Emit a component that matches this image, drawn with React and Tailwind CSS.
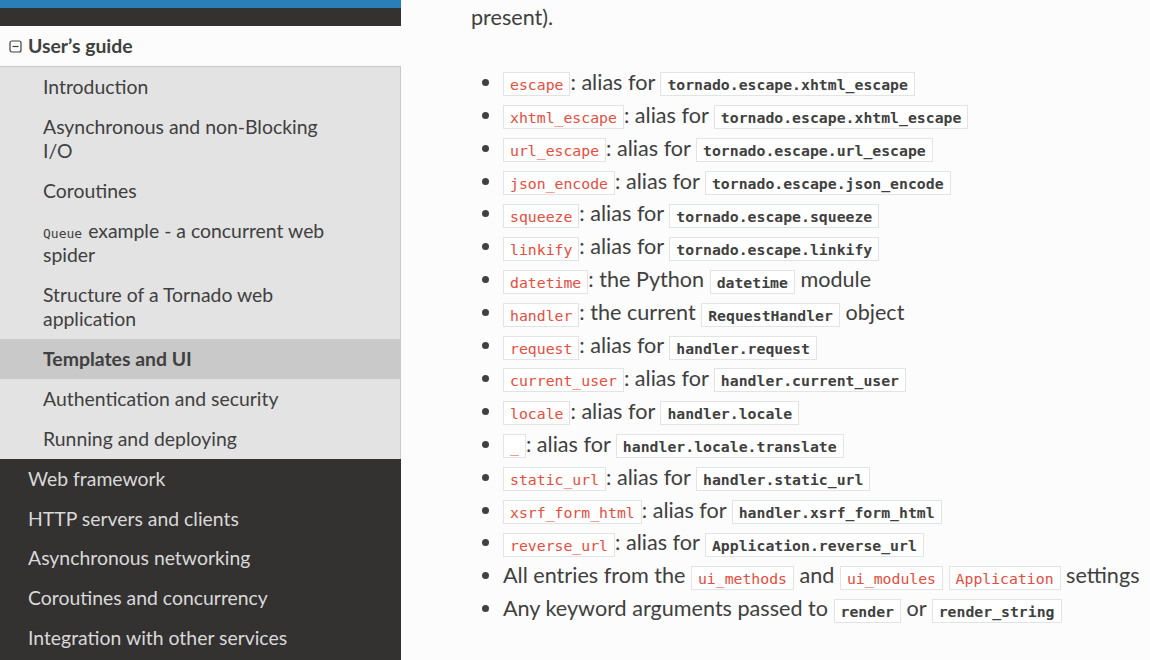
import React from "react";

// inline literal, red like the RTD theme
const Lit = ({ children }) => (
  <code className="border border-[#e1e4e5] bg-white px-[6px] py-[2.5px] leading-none text-[#e74c3c] text-[14.8px] font-['DejaVu_Sans_Mono',monospace] whitespace-nowrap">
    {children}
  </code>
);

// cross-reference literal, bold and dark
const Ref = ({ children }) => (
  <code className="border border-[#e1e4e5] bg-white px-[6px] py-[2.5px] leading-none text-[#404040] font-bold text-[14.8px] font-['DejaVu_Sans_Mono',monospace] whitespace-nowrap">
    {children}
  </code>
);

const aliases = [
  ["escape", "tornado.escape.xhtml_escape"],
  ["xhtml_escape", "tornado.escape.xhtml_escape"],
  ["url_escape", "tornado.escape.url_escape"],
  ["json_encode", "tornado.escape.json_encode"],
  ["squeeze", "tornado.escape.squeeze"],
  ["linkify", "tornado.escape.linkify"],
];

const aliases2 = [
  ["request", "handler.request"],
  ["current_user", "handler.current_user"],
  ["locale", "handler.locale"],
  ["_", "handler.locale.translate"],
  ["static_url", "handler.static_url"],
  ["xsrf_form_html", "handler.xsrf_form_html"],
  ["reverse_url", "Application.reverse_url"],
];

const guideItems = [
  { label: "Introduction" },
  { label: "Asynchronous and non-Blocking I/O" },
  { label: "Coroutines" },
  { label: "example - a concurrent web spider", code: "Queue" },
  { label: "Structure of a Tornado web application" },
  { label: "Templates and UI", current: true },
  { label: "Authentication and security" },
  { label: "Running and deploying" },
];

const topItems = [
  "Web framework",
  "HTTP servers and clients",
  "Asynchronous networking",
  "Coroutines and concurrency",
  "Integration with other services",
];

const MinusBox = () => (
  <svg width="13" height="13" viewBox="0 0 13 13" className="shrink-0">
    <rect x="1" y="1" width="11" height="11" rx="2" fill="none" stroke="#404040" strokeWidth="1.2" />
    <path d="M3.5 6.5 H9.5" stroke="#404040" strokeWidth="1.2" />
  </svg>
);

function Sidebar() {
  return (
    <nav className="w-[401px] shrink-0 bg-[#343131] font-['Lato',sans-serif] text-[19.4px] leading-[24px]">
      <div className="h-[8px] bg-[#2980b9]" />
      <div className="h-[18px]" />
      <div className="flex items-center gap-[6px] bg-[#fcfcfc] h-[41px] pl-[9px] border-b border-[#c9c9c9] font-bold text-[#404040]">
        <MinusBox />
        <span>User’s guide</span>
      </div>
      <ul className="bg-[#e3e3e3] border-r border-[#c9c9c9]">
        {guideItems.map((it) => (
          <li
            key={it.label}
            className={`pl-[43px] pr-[50px] py-[8px] text-[#404040] ${it.current ? "bg-[#c9c9c9] font-bold" : ""}`}
          >
            {it.code && (
              <span className="font-['DejaVu_Sans_Mono',monospace] text-[13px] leading-none mr-[6px]">{it.code}</span>
            )}
            {it.label}
          </li>
        ))}
      </ul>
      <ul className="text-[#d9d9d9]">
        {topItems.map((t) => (
          <li key={t} className="pl-[28px] py-[8px] h-[39.7px]">
            {t}
          </li>
        ))}
      </ul>
    </nav>
  );
}

function Content() {
  return (
    <main className="flex-1 bg-[#fcfcfc] pl-[70px] font-['Lato',sans-serif] text-[21.6px] leading-[32.4px] text-[#404040] overflow-hidden">
      <p className="pt-[1px] mb-[32.4px]">present).</p>
      <ul className="list-disc ml-[32px] whitespace-nowrap leading-[32.9px]">
        {aliases.map(([a, b]) => (
          <li key={a}>
            <Lit>{a}</Lit>: alias for <Ref>{b}</Ref>
          </li>
        ))}
        <li>
          <Lit>datetime</Lit>: the Python <Ref>datetime</Ref> module
        </li>
        <li>
          <Lit>handler</Lit>: the current <Ref>RequestHandler</Ref> object
        </li>
        {aliases2.map(([a, b]) => (
          <li key={a}>
            <Lit>{a}</Lit>: alias for <Ref>{b}</Ref>
          </li>
        ))}
        <li>
          All entries from the <Lit>ui_methods</Lit> and <Lit>ui_modules</Lit> <Lit>Application</Lit> settings
        </li>
        <li>
          Any keyword arguments passed to <Ref>render</Ref> or <Ref>render_string</Ref>
        </li>
      </ul>
    </main>
  );
}

export default function App() {
  return (
    <div className="flex w-[1150px] h-[660px] overflow-hidden bg-[#fcfcfc]">
      <Sidebar />
      <Content />
    </div>
  );
}
